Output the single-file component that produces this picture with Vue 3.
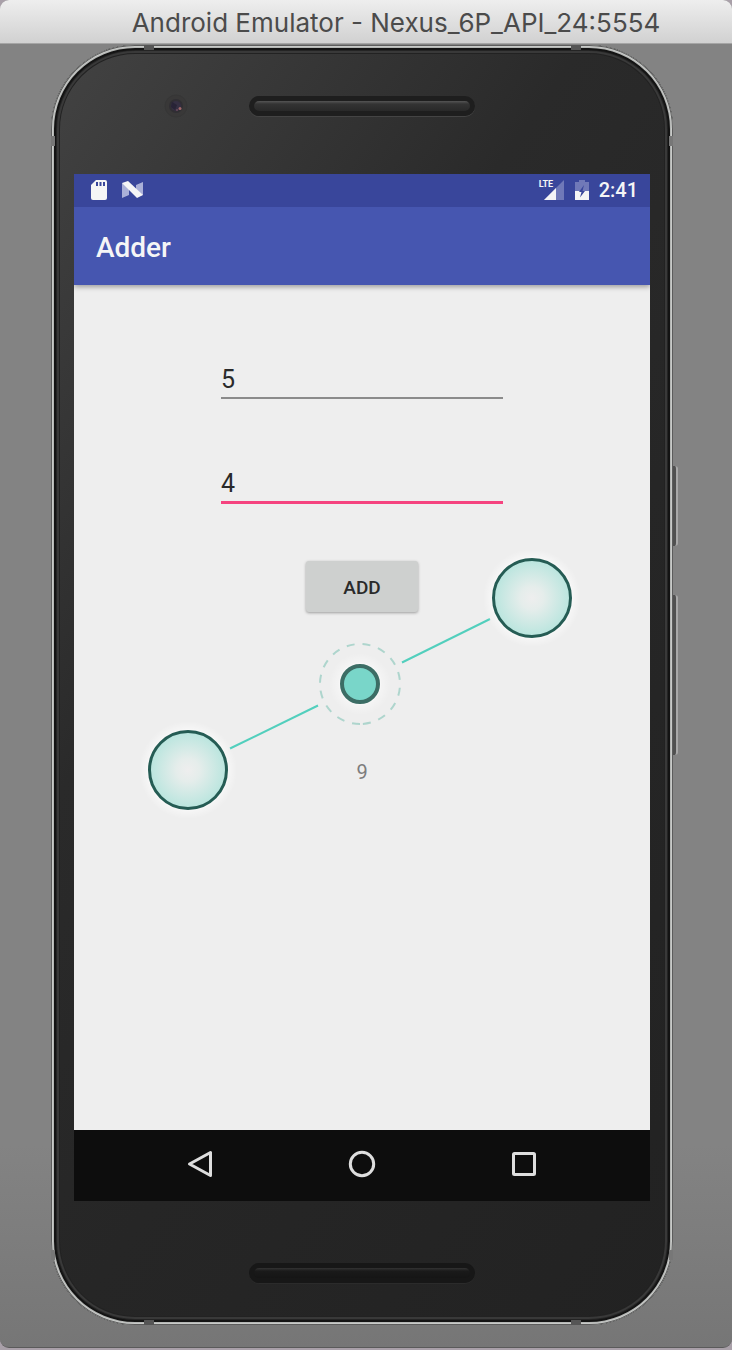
<script setup>
import { ref } from 'vue'

const first = ref('5')
const second = ref('4')
const result = ref(9)

const bands = ['top left', 'top right', 'bottom left', 'bottom right', 'left upper', 'left lower', 'side-right upper', 'side-right lower']

function add() {
  result.value = Number(first.value) + Number(second.value)
}
</script>

<template>
  <div class="window">
    <header class="titlebar">
      <h1>Android Emulator - Nexus_6P_API_24:5554</h1>
    </header>

    <main class="stage">
      <div class="phone">
        <i class="key power"></i>
        <i class="key volume"></i>
        <i v-for="b in bands" :key="b" class="band" :class="b"></i>

        <div class="forehead">
          <svg class="camera" width="26" height="26" viewBox="0 0 26 26" aria-hidden="true">
            <circle cx="13" cy="13" r="11" fill="#393838" stroke="#363636" />
            <circle cx="13" cy="13" r="7" fill="#302e33" />
            <circle cx="13" cy="13" r="5" fill="#352f42" />
            <path d="M9 9l5 3-2 5-4-3z" fill="#282336" />
            <circle cx="17" cy="15.500" r="1.500" fill="#a0676a" />
            <circle cx="14" cy="17" r="1" fill="#6b4a5c" />
          </svg>
          <div class="speaker"></div>
        </div>

        <div class="screen">
          <div class="status">
            <svg width="18" height="22" viewBox="0 0 18 22" aria-hidden="true">
              <path d="M6 1h9a2 2 0 0 1 2 2v16a2 2 0 0 1-2 2H3a2 2 0 0 1-2-2V6z" fill="#f5f5f6" />
              <path d="M6 3h2v4H6zM9.500 3h2v4h-2zM13 3h2v4h-2z" fill="#39469b" />
            </svg>
            <svg class="nougat" width="22" height="18" viewBox="0 0 22 18" aria-hidden="true">
              <path d="M0 2l7 3v9l-7 3zM21 1v13l-7 1V4z" fill="#aab0d8" />
              <path d="M0 2l6-2 15 14-6 3z" fill="#f5f5f6" />
            </svg>
            <span class="spacer"></span>
            <span class="signal">
              <span class="lte">LTE</span>
              <svg width="20" height="20" viewBox="0 0 20 20" aria-hidden="true">
                <path d="M20 0v20H0z" fill="#7079b8" />
                <path d="M12 8v12H0z" fill="#f5f5f6" />
              </svg>
            </span>
            <svg width="14" height="22" viewBox="0 0 14 22" aria-hidden="true">
              <path d="M4 1h6v2h4v9H0V3h4z" fill="#7079b8" />
              <path d="M0 12h14v9H0z" fill="#f5f5f6" />
              <path d="M9 6L4 13h2.500L5 18.500l5-6.500H7.500z" fill="#39469b" />
            </svg>
            <span class="clock">2:41</span>
          </div>

          <div class="appbar"><h2>Adder</h2></div>

          <form class="content" @submit.prevent="add">
            <input v-model="first" type="text" inputmode="numeric" aria-label="First number">
            <input v-model="second" class="active" type="text" inputmode="numeric" aria-label="Second number">
            <button class="add" type="submit">ADD</button>
            <output>{{ result }}</output>

            <svg class="gesture" width="444" height="272" viewBox="-222 -136 444 272" aria-hidden="true">
              <defs>
                <radialGradient id="touch">
                  <stop offset="0" stop-color="#eeeeee" />
                  <stop offset="0.300" stop-color="#e5edeb" />
                  <stop offset="1" stop-color="#b9e5de" />
                </radialGradient>
                <radialGradient id="glow">
                  <stop offset="0.780" stop-color="#fff" stop-opacity="0.900" />
                  <stop offset="0.850" stop-color="#fff" stop-opacity="0.400" />
                  <stop offset="1" stop-color="#fff" stop-opacity="0" />
                </radialGradient>
                <radialGradient id="core-glow">
                  <stop offset="0.600" stop-color="#fff" stop-opacity="0.900" />
                  <stop offset="0.700" stop-color="#fff" stop-opacity="0.350" />
                  <stop offset="1" stop-color="#fff" stop-opacity="0" />
                </radialGradient>
              </defs>
              <path d="M-130 64.500L-42 21.500M42-21.500L130-65" stroke="#52cfbd" stroke-width="2" />
              <circle cx="-172" cy="86" r="49" fill="url(#glow)" />
              <circle cx="-172" cy="86" r="38.500" fill="url(#touch)" stroke="#255c54" stroke-width="3" />
              <circle cx="172" cy="-86" r="49" fill="url(#glow)" />
              <circle cx="172" cy="-86" r="38.500" fill="url(#touch)" stroke="#255c54" stroke-width="3" />
              <circle r="31" fill="url(#core-glow)" />
              <circle r="40" fill="none" stroke="#aed5cd" stroke-width="2" stroke-dasharray="8 8" transform="rotate(90)" />
              <circle r="18" fill="#79d6c9" stroke="#3c6d65" stroke-width="4" />
            </svg>
          </form>

          <nav class="navbar">
            <button type="button" aria-label="Back">
              <svg width="28" height="28" viewBox="0 0 28 28">
                <path d="M24.500 2.500v23L3.500 14z" fill="none" stroke="#dedede" stroke-width="3" stroke-linejoin="round" />
              </svg>
            </button>
            <button type="button" aria-label="Home">
              <svg width="28" height="28" viewBox="0 0 28 28">
                <circle cx="14" cy="14" r="11.700" fill="none" stroke="#dedede" stroke-width="3" />
              </svg>
            </button>
            <button type="button" aria-label="Overview">
              <svg width="28" height="28" viewBox="0 0 28 28">
                <rect x="3.500" y="3.500" width="21" height="21" rx="1" fill="none" stroke="#dedede" stroke-width="3" />
              </svg>
            </button>
          </nav>
        </div>

        <div class="chin"><div class="speaker dim"></div></div>
      </div>
    </main>
  </div>
</template>

<style>
body {
  background: #a9a0a9;
}
</style>

<style scoped>
* {
  box-sizing: border-box;
}

.window {
  margin-bottom: 2px;
  border-bottom: 1px solid #5a5a5a;
  border-radius: 9px;
  overflow: hidden;
  background: linear-gradient(#838383 85%, #767676);
  font-family: Roboto, "Liberation Sans", sans-serif;
}

.titlebar {
  display: flex;
  align-items: center;
  justify-content: center;
  height: 44px;
  padding: 2px 0 0 60px;
  border-bottom: 1px solid #a5a5a5;
  background: linear-gradient(#eeeeee, #d1d1d1);
}

h1 {
  margin: 0;
  font-family: Inter, Roboto, sans-serif;
  font-size: 26px;
  font-weight: 400;
  line-height: 32px;
  white-space: nowrap;
  color: #4b4b4b;
}

.stage {
  padding: 1px 59px 22px 51px;
}

.phone {
  position: relative;
  padding: 0 23px;
  border-radius: 84px;
  background: linear-gradient(125deg, #434343, #2a2a2a 35%, #262626 60%, #222);
  box-shadow:
    inset 0 0 0 1px #5c5c5c,
    inset 0 0 0 2px #c8cac8,
    inset 0 0 0 3px #b4b6b4,
    inset 0 0 0 5px #131313,
    inset 0 0 0 6px #242424,
    inset 0 0 0 8px #393939,
    inset 0 0 0 9px #222;
}

.key {
  position: absolute;
  left: 100%;
  width: 5px;
  border-right: 2px solid #a8a8a8;
  border-radius: 0 3px 3px 0;
  background: #505050;
}

.power {
  top: 421px;
  height: 80px;
}

.volume {
  top: 550px;
  height: 160px;
}

.band {
  position: absolute;
  width: 10px;
  height: 5px;
  background: #555;
}

.top {
  top: 0;
}

.bottom {
  bottom: 0;
}

.top.left,
.bottom.left {
  left: 93px;
}

.top.right,
.bottom.right {
  right: 92px;
}

.upper,
.lower {
  width: 4px;
  height: 10px;
  background: #777;
}

.upper {
  top: 91px;
}

.lower {
  bottom: 65px;
}

.left.upper,
.left.lower {
  left: 0;
}

.side-right {
  right: 0;
}

.forehead {
  display: grid;
  grid-template-columns: 1fr 226px 1fr;
  align-items: center;
  height: 129px;
  padding-bottom: 7px;
}

.camera {
  justify-self: end;
  margin-right: 60px;
}

.speaker {
  grid-column: 2;
  width: 226px;
  height: 20px;
  border: 5px solid #1e1e1e;
  border-radius: 10px;
  background: linear-gradient(#555, #333 30%, #292929);
  box-shadow: 0 1px 0 #444;
}

.dim {
  border-color: #171717;
  background: linear-gradient(#333, #1a1a1a 30%, #151515);
  box-shadow: 0 1px 0 #2b2b2b;
}

.chin {
  display: flex;
  justify-content: center;
  height: 124px;
  padding-top: 62px;
}

.screen {
  background: #eee;
}

.status {
  display: flex;
  align-items: center;
  height: 33px;
  padding: 0 12px 1px 16px;
  background: #39469b;
  color: #f5f5f6;
}

.nougat {
  margin-left: 14px;
}

.spacer {
  flex: 1;
}

.signal {
  position: relative;
  display: flex;
  padding-left: 5px;
  margin-right: 11px;
}

.lte {
  position: absolute;
  top: 0;
  left: 0;
  font-size: 9px;
  font-weight: 700;
  line-height: 9px;
}

.clock {
  margin-left: 10px;
  font-size: 20px;
  font-weight: 500;
  line-height: 24px;
}

.appbar {
  position: relative;
  display: flex;
  align-items: center;
  height: 78px;
  padding: 4px 22px 0;
  background: #4656b0;
  box-shadow: 0 2px 5px rgba(0, 0, 0, 0.35);
  clip-path: inset(0 0 -8px 0);
}

h2 {
  margin: 0;
  font-size: 28px;
  font-weight: 500;
  line-height: 32px;
  color: #f5f5f6;
}

.content {
  position: relative;
  display: flex;
  flex-direction: column;
  align-items: center;
  min-height: 845px;
  padding-top: 79px;
}

input {
  width: 282px;
  height: 35px;
  margin: 0 0 69px;
  padding: 0 0 3px;
  border: 0;
  border-bottom: 2px solid #8b8b8b;
  border-radius: 0;
  outline: 0;
  background: transparent;
  font-family: inherit;
  font-size: 25px;
  line-height: 30px;
  color: #2a2a2a;
}

input.active {
  height: 36px;
  margin-bottom: 57px;
  border-bottom: 3px solid #f5437f;
}

.add {
  width: 112px;
  height: 51px;
  padding: 1px 0 0;
  border: 0;
  border-radius: 3px;
  background: #ced0cf;
  box-shadow: 0 1px 3px rgba(0, 0, 0, 0.35);
  font-family: inherit;
  font-size: 19px;
  font-weight: 500;
  color: #2a2a2a;
}

output {
  margin-top: 148px;
  font-size: 20px;
  line-height: 24px;
  color: #7d7d7d;
}

.gesture {
  position: absolute;
  top: 263px;
  left: calc(50% - 224px);
  pointer-events: none;
}

.navbar {
  display: flex;
  align-items: center;
  justify-content: center;
  gap: 114px;
  height: 71px;
  padding-bottom: 3px;
  background: #0d0d0d;
}

.navbar button {
  display: flex;
  align-items: center;
  justify-content: center;
  width: 48px;
  height: 48px;
  padding: 0;
  border: 0;
  background: none;
}
</style>
